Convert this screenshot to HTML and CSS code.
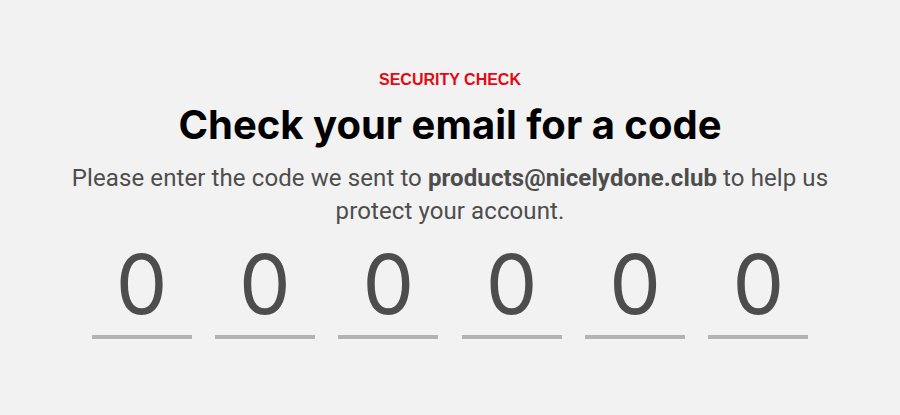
FILE: index.html
```html
<!DOCTYPE html>
<html lang="en">
<head>
<meta charset="utf-8">
<title>Security check</title>
<link rel="stylesheet" href="styles.css">
</head>
<body>
<main class="page">
  <p class="eyebrow">SECURITY CHECK</p>
  <h1 class="title">Check your email for a code</h1>
  <p class="lead">Please enter the code we sent to <strong>products@nicelydone.club</strong> to help us protect your account.</p>
  <div class="code">
    <div class="digit">0</div>
    <div class="digit">0</div>
    <div class="digit">0</div>
    <div class="digit">0</div>
    <div class="digit">0</div>
    <div class="digit">0</div>
  </div>
</main>
</body>
</html>
```
FILE: styles.css
```css
html, body {
  margin: 0;
  padding: 0;
  background: #f2f2f2;
}
body {
  width: 900px;
  height: 415px;
  overflow: hidden;
  font-family: Roboto, "Liberation Sans", sans-serif;
}
.page {
  display: flex;
  flex-direction: column;
  align-items: center;
  padding-top: 70px;
}
.eyebrow {
  margin: 0;
  font-family: "Liberation Sans", Arial, sans-serif;
  font-weight: 700;
  font-size: 16px;
  line-height: 20px;
  color: #e50914;
}
.title {
  margin: 11px 0 0;
  font-family: Inter, sans-serif;
  font-weight: 700;
  font-size: 40px;
  line-height: 48px;
  color: #000;
}
.lead {
  margin: 13px 0 0;
  width: 780px;
  text-align: center;
  font-size: 24px;
  line-height: 33px;
  color: #4d4d4d;
  letter-spacing: 0.1px;
}
.lead strong {
  font-weight: 700;
  color: #4d4d4d;
}
.code {
  display: flex;
  gap: 23.4px;
  margin-top: 21px;
}
.digit {
  width: 100px;
  height: 86px;
  border-bottom: 4px solid #b3b3b3;
  text-align: center;
  font-family: Inter, sans-serif;
  font-size: 82px;
  line-height: 72px;
  font-weight: 400;
  color: #4d4d4d;
}
```
